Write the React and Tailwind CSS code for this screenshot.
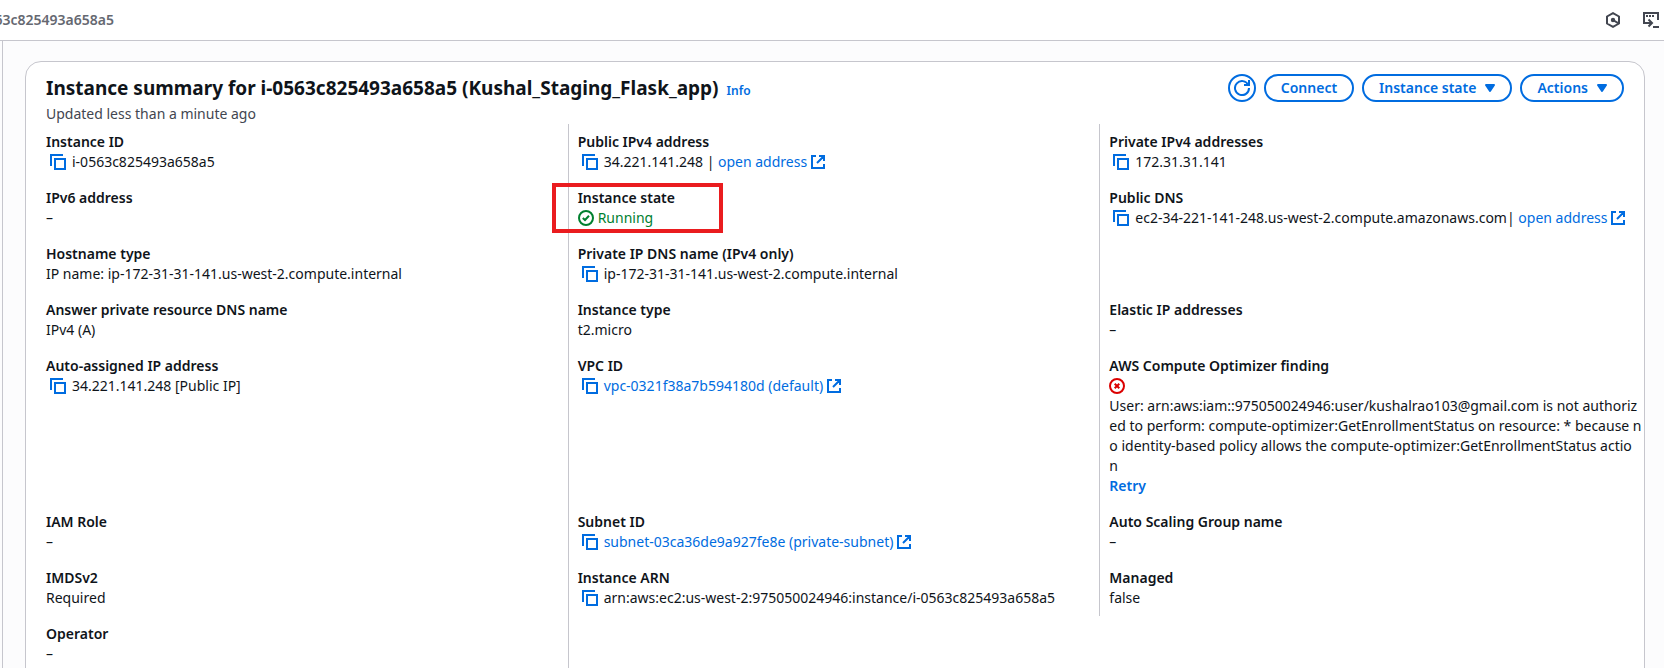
import React from "react";

const CopyIcon = () => (
  <svg viewBox="0 0 16 16" className="h-4 w-4" fill="none" stroke="currentColor" strokeWidth="2">
    <path d="M5 5h10v10H5z" />
    <path d="M1 12V1h12" />
  </svg>
);

const ExternalIcon = () => (
  <svg viewBox="0 0 16 16" className="h-4 w-4 shrink-0" fill="none" stroke="currentColor" strokeWidth="2">
    <path d="M6 2H2v12h12v-4M9 2h5v5M7 9l7-7" />
  </svg>
);

const CheckIcon = () => (
  <svg viewBox="0 0 16 16" className="h-4 w-4" fill="none" stroke="currentColor" strokeWidth="2">
    <circle cx="8" cy="8" r="7" />
    <path d="M4.800 8l2.200 2 4-4.200" />
  </svg>
);

const ErrorIcon = () => (
  <svg viewBox="0 0 16 16" className="h-4 w-4" fill="none" stroke="currentColor" strokeWidth="2" aria-label="Error">
    <circle cx="8" cy="8" r="7" />
    <path d="M5.700 5.700l4.600 4.600M10.300 5.700l-4.600 4.600" />
  </svg>
);

const RefreshIcon = () => (
  <svg viewBox="0 0 16 16" className="h-4 w-4" fill="none" stroke="currentColor" strokeWidth="2">
    <path d="M15 8a7 7 0 1 1-.700-3" />
    <path d="M15 0v5h-5" />
  </svg>
);

const CaretIcon = () => (
  <svg viewBox="0 0 16 16" className="h-4 w-4" fill="currentColor" stroke="currentColor" strokeWidth="2" strokeLinejoin="round">
    <path d="M4 5h8l-4 6z" />
  </svg>
);

const AssistantIcon = () => (
  <svg viewBox="0 0 16 16" className="h-4 w-4" fill="none" stroke="currentColor" strokeWidth="2">
    <path d="M8 1.1l6 3.400v7L8 14.900l-6-3.400v-7z" strokeLinejoin="round" />
    <path d="M8 8l5.500 3.400" />
    <circle cx="8" cy="8" r="1.200" fill="currentColor" />
  </svg>
);

const ShellIcon = () => (
  <svg viewBox="0 0 16 16" className="h-4 w-4" fill="none" stroke="currentColor" strokeWidth="2">
    <path d="M4 11H1V1h14v7M3 4h2M6 4h2M9 4h2M4 11h5M5.500 7.500l3.500 3.500L5.500 14.500M10 15h6" />
  </svg>
);

const Copy = ({ label }) => (
  <button type="button" aria-label={`Copy ${label}`} className="ml-1 mr-1.5 shrink-0 text-[#006ce0]">
    <CopyIcon />
  </button>
);

const Link = ({ children }) => (
  <a href="#" className="flex items-center gap-[3px] text-[#006ce0]">
    {children}
    <ExternalIcon />
  </a>
);

const Field = ({ label, copy, highlight, last, children }) => (
  <div className={`relative px-[9px] py-2 ${last ? "" : "border-r border-[#c6c6cd]"}`}>
    {label && <dt className="font-semibold">{label}</dt>}
    {label && (
      <dd className="flex min-h-5 items-center whitespace-nowrap">
        {copy && <Copy label={label} />}
        {children}
      </dd>
    )}
    {highlight && (
      <div className="pointer-events-none absolute -left-[17px] top-[3px] h-[50px] w-[171px] border-4 border-[#ea1c1f]" />
    )}
  </div>
);

const pill = "flex h-7 items-center gap-1.5 rounded-full border-2 border-[#006ce0] pl-[15px] font-semibold text-[#006ce0]";

export default function App() {
  return (
    <div className="flex h-screen flex-col overflow-hidden bg-[#fcfcfd] font-['Noto_Sans',sans-serif] text-sm leading-5 text-[#0f141a]">
      <header className="flex h-[41px] shrink-0 items-center justify-between border-b border-[#c6c6cd] bg-white pr-[5px]">
        <nav className="flex w-[114px] justify-end overflow-hidden whitespace-nowrap font-semibold text-[#656871]">
          <span>i-0563c825493a658a5</span>
        </nav>
        <div className="flex gap-[22px] text-[#424650]">
          <button type="button" aria-label="Assistant"><AssistantIcon /></button>
          <button type="button" aria-label="CloudShell"><ShellIcon /></button>
        </div>
      </header>
      <main className="ml-0.5 flex-1 border-l border-[#c6c6cd] pl-[22px] pr-[19px] pt-5">
        <section className="rounded-2xl border border-[#c6c6cd] bg-white pb-5">
          <div className="flex items-start justify-between px-5 pt-3">
            <div>
              <div className="flex items-baseline gap-2">
                <h1 className="text-[19px] leading-7 font-bold">
                  Instance summary for i-0563c825493a658a5 (Kushal_Staging_Flask_app)
                </h1>
                <a href="#" className="text-xs font-semibold text-[#006ce0]">Info</a>
              </div>
              <p className="pt-0.5 text-[#424650]">Updated less than a minute ago</p>
            </div>
            <div className="flex gap-2">
              <button type="button" aria-label="Refresh" className="flex h-7 w-7 items-center justify-center rounded-full border-2 border-[#006ce0] text-[#006ce0]">
                <RefreshIcon />
              </button>
              <button type="button" className={`${pill} pr-[15px]`}>Connect</button>
              <button type="button" className={`${pill} pr-3`}>Instance state <CaretIcon /></button>
              <button type="button" className={`${pill} pr-3`}>Actions <CaretIcon /></button>
            </div>
          </div>
          <dl className="grid grid-cols-3 pl-[11px] pr-3">
            <Field label="Instance ID" copy>i-0563c825493a658a5</Field>
            <Field label="Public IPv4 address" copy>
              34.221.141.248&nbsp;|&nbsp;<Link>open address</Link>
            </Field>
            <Field label="Private IPv4 addresses" copy last>172.31.31.141</Field>

            <Field label="IPv6 address">–</Field>
            <Field label="Instance state" highlight>
              <span className="flex items-center gap-1 text-[#00802f]"><CheckIcon />Running</span>
            </Field>
            <Field label="Public DNS" copy last>
              ec2-34-221-141-248.us-west-2.compute.amazonaws.com|&nbsp;<Link>open address</Link>
            </Field>

            <Field label="Hostname type">IP name: ip-172-31-31-141.us-west-2.compute.internal</Field>
            <Field label="Private IP DNS name (IPv4 only)" copy>ip-172-31-31-141.us-west-2.compute.internal</Field>
            <Field last />

            <Field label="Answer private resource DNS name">IPv4 (A)</Field>
            <Field label="Instance type">t2.micro</Field>
            <Field label="Elastic IP addresses" last>–</Field>

            <Field label="Auto-assigned IP address" copy>34.221.141.248 [Public IP]</Field>
            <Field label="VPC ID" copy><Link>vpc-0321f38a7b594180d (default)</Link></Field>
            <Field label="AWS Compute Optimizer finding" last>
              <div>
                <div className="flex h-5 items-center text-[#db0000]"><ErrorIcon /></div>
                <p>
                  User: arn:aws:iam::975050024946:user/kushalrao103@gmail.com is not authoriz<br />
                  ed to perform: compute-optimizer:GetEnrollmentStatus on resource: * because n<br />
                  o identity-based policy allows the compute-optimizer:GetEnrollmentStatus actio<br />
                  n
                </p>
                <button type="button" className="block font-semibold text-[#006ce0]">Retry</button>
              </div>
            </Field>

            <Field label="IAM Role">–</Field>
            <Field label="Subnet ID" copy><Link>subnet-03ca36de9a927fe8e (private-subnet)</Link></Field>
            <Field label="Auto Scaling Group name" last>–</Field>

            <Field label="IMDSv2">Required</Field>
            <Field label="Instance ARN" copy>arn:aws:ec2:us-west-2:975050024946:instance/i-0563c825493a658a5</Field>
            <Field label="Managed" last>false</Field>

            <Field label="Operator">–</Field>
          </dl>
        </section>
      </main>
    </div>
  );
}
